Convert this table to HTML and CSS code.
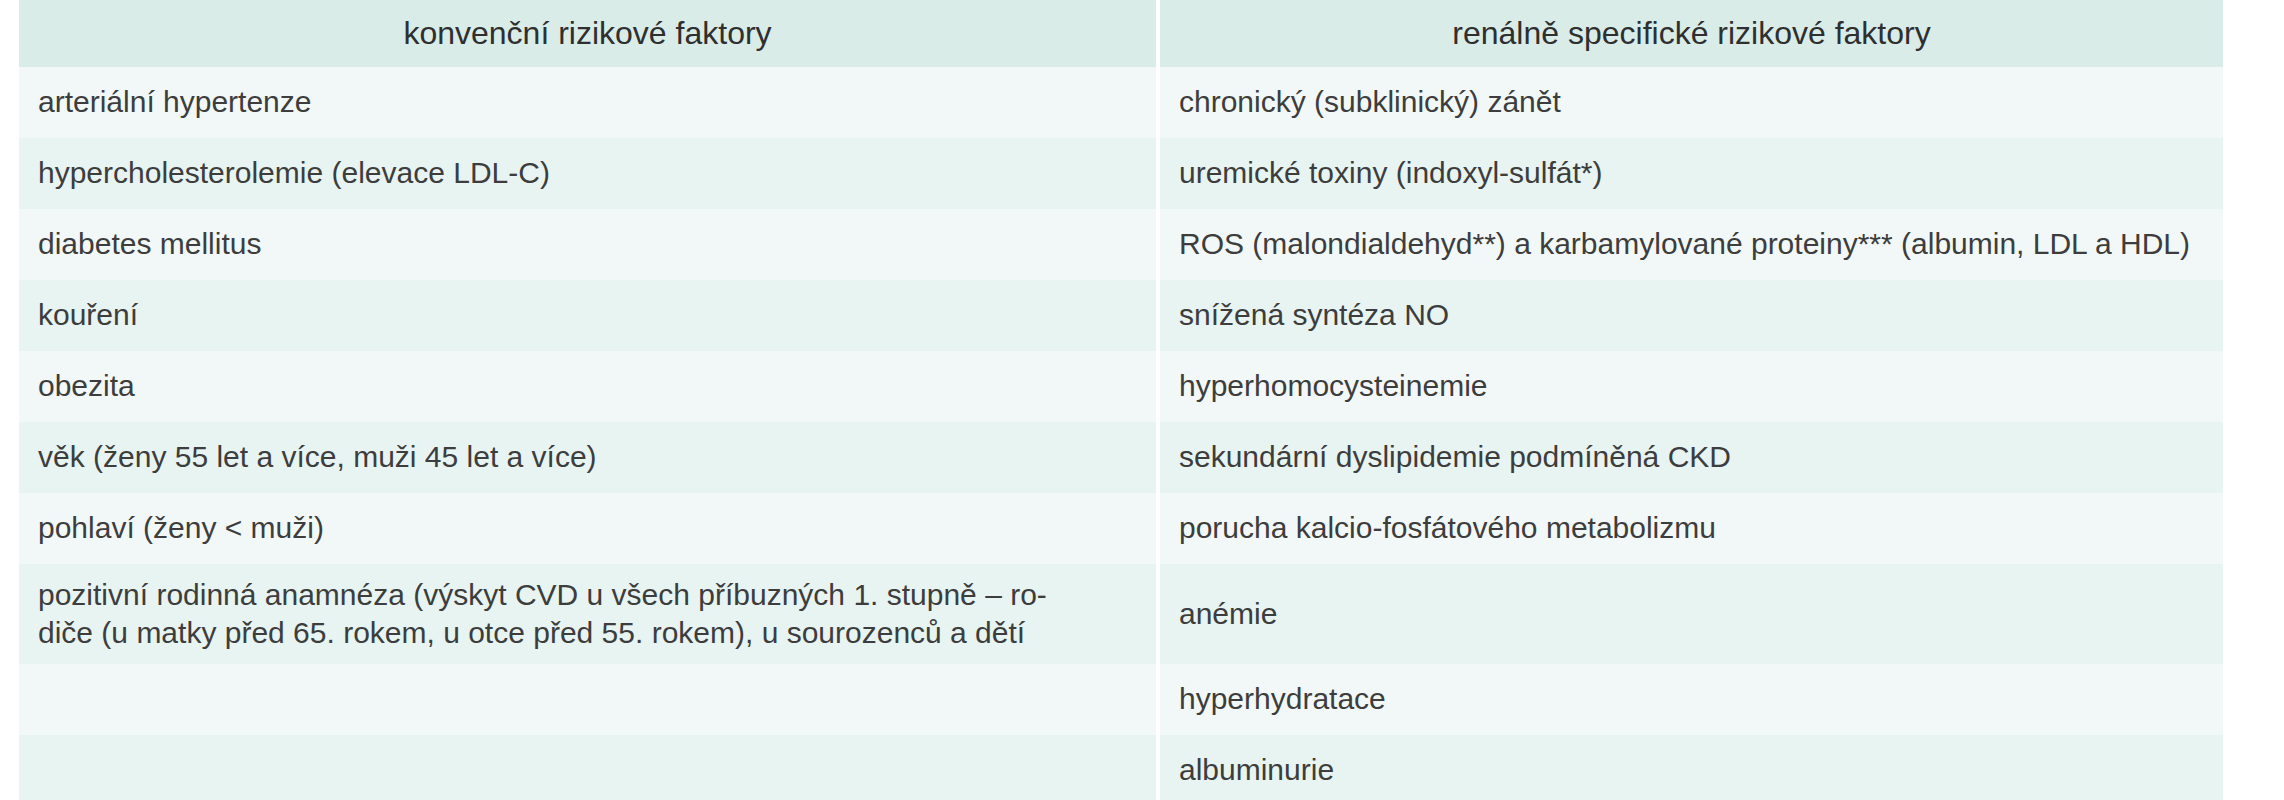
FILE: index.html
```html
<!DOCTYPE html>
<html lang="cs">
<head>
<meta charset="utf-8">
<title>Rizikové faktory</title>
<link rel="stylesheet" href="styles.css">
</head>
<body>
<table class="risk">
  <thead>
    <tr><th>konvenční rizikové faktory</th><th>renálně specifické rizikové faktory</th></tr>
  </thead>
  <tbody>
    <tr><td>arteriální hypertenze</td><td>chronický (subklinický) zánět</td></tr>
    <tr><td>hypercholesterolemie (elevace LDL-C)</td><td>uremické toxiny (indoxyl-sulfát*)</td></tr>
    <tr><td>diabetes mellitus</td><td>ROS (malondialdehyd**) a karbamylované proteiny*** (albumin, LDL a HDL)</td></tr>
    <tr><td>kouření</td><td>snížená syntéza NO</td></tr>
    <tr><td>obezita</td><td>hyperhomocysteinemie</td></tr>
    <tr><td>věk (ženy 55 let a více, muži 45 let a více)</td><td>sekundární dyslipidemie podmíněná CKD</td></tr>
    <tr><td>pohlaví (ženy &lt; muži)</td><td>porucha kalcio-fosfátového metabolizmu</td></tr>
    <tr class="tall"><td>pozitivní rodinná anamnéza (výskyt CVD u všech příbuzných 1. stupně – ro-<br>diče (u matky před 65. rokem, u otce před 55. rokem), u sourozenců a dětí</td><td>anémie</td></tr>
    <tr><td></td><td>hyperhydratace</td></tr>
    <tr><td></td><td>albuminurie</td></tr>
  </tbody>
</table>
</body>
</html>
```

FILE: styles.css
```css
html, body {
  margin: 0;
  padding: 0;
  background: #ffffff;
}

.risk {
  margin-left: 19px;
  width: 2204px;
  border-collapse: collapse;
  table-layout: fixed;
  font-family: "Liberation Sans", Arial, sans-serif;
  font-size: 30px;
  line-height: 38px;
  color: #3d3d3d;
}

.risk th,
.risk td {
  padding: 16px 19px 17px;
  height: 38px;
  text-align: left;
  vertical-align: middle;
  font-weight: normal;
  white-space: nowrap;
  border-left: 4px solid #ffffff;
}

.risk th:first-child,
.risk td:first-child {
  border-left: none;
  width: 1099px;
}

.risk th {
  background: #d9ece8;
  text-align: center;
  color: #2f2f2f;
  font-size: 32px;
  padding-top: 14px;
  padding-bottom: 15px;
}

.risk tbody tr:nth-child(odd) td {
  background: #f2f8f7;
}

.risk tbody tr:nth-child(even) td {
  background: #e7f4f2;
}

.risk tbody tr.tall td {
  padding-top: 12px;
  padding-bottom: 12px;
}
```
